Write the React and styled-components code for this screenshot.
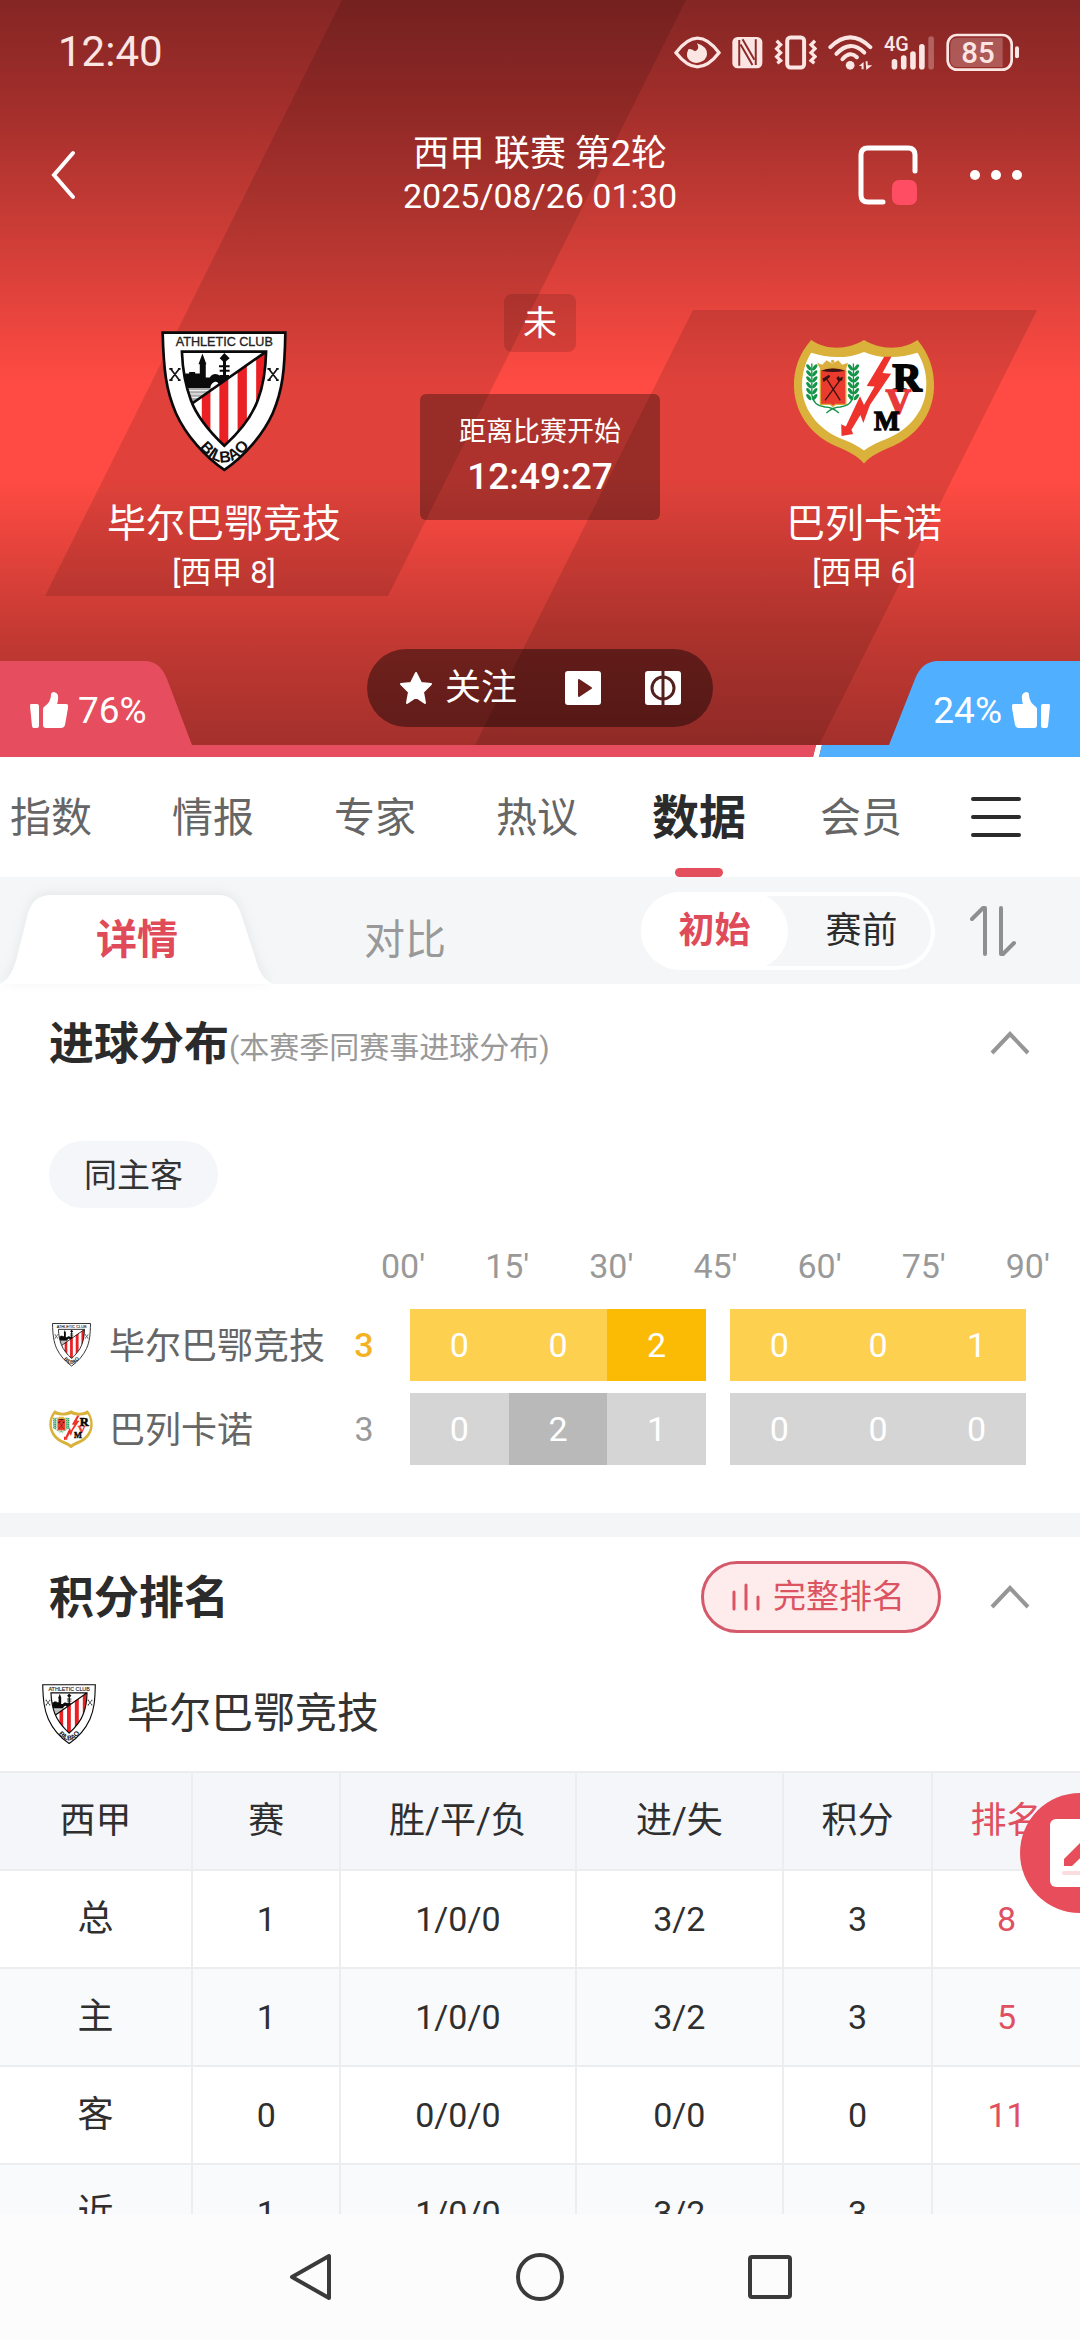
import React, { useId, useState } from "react";
import styled, { createGlobalStyle } from "styled-components";

const GlobalStyle = createGlobalStyle`
  * {
    box-sizing: border-box;
  }
  body {
    margin: 0;
    background-color: #fff;
    color: #333;
    font-family: Roboto, "Noto Sans CJK SC", sans-serif;
  }
  button {
    border: none;
    padding: 0;
    background: none;
    color: inherit;
    font-family: inherit;
    cursor: pointer;
  }
  svg {
    display: block;
    flex-shrink: 0;
  }
  h1, h2, p {
    margin: 0;
    font-weight: 400;
  }
`;

const Screen = styled.div`
  display: flex;
  flex-direction: column;
  height: 100vh;
  position: relative;
  overflow: hidden;
`;

const Scroll = styled.main`
  flex: 1;
  min-height: 0;
  overflow-x: hidden;
  overflow-y: auto;
  scrollbar-width: none;
`;

/* ---------- hero ---------- */

const Hero = styled.header`
  position: relative;
  color: #fff;
  background: linear-gradient(
    to bottom,
    #842624 0,
    #a22e2b 105px,
    #c63b35 215px,
    #ff4b43 385px,
    #ff4b43 480px,
    #c53a33 630px,
    #a02f2b 757px
  );
`;

const Stripes = styled.svg`
  position: absolute;
  top: 0;
  left: 0;
  width: 100%;
  height: 100%;
`;

const StatusBar = styled.div`
  position: relative;
  display: flex;
  justify-content: space-between;
  align-items: center;
  height: 104px;
  padding: 0 60px 0 58px;
  color: #fbe6e4;
`;

const Clock = styled.span`
  font-size: 42px;
  line-height: 52px;
`;

const StatusIcons = styled.div`
  display: flex;
  align-items: center;
  gap: 11px;
`;

const TitleBar = styled.div`
  position: relative;
  display: grid;
  grid-template-columns: 1fr auto 1fr;
  align-items: center;
  margin-top: 29px;
  padding: 0 58px;
`;

const IconButton = styled.button`
  display: flex;
  align-items: center;
  justify-content: center;
`;

const BackButton = styled(IconButton)`
  margin-left: -10px;
`;

const TitleActions = styled.div`
  display: flex;
  align-items: center;
  justify-content: flex-end;
  gap: 52px;
`;

const MatchTitle = styled.h1`
  text-align: center;
  font-size: 36px;
  line-height: 42px;
`;

const MatchTime = styled.span`
  display: block;
  font-size: 34px;
`;

const Versus = styled.div`
  position: relative;
  display: grid;
  grid-template-columns: 1fr 240px 1fr;
  margin-top: 77px;
`;

const Team = styled.div`
  display: flex;
  flex-direction: column;
  align-items: center;
  padding-top: 37px;
  padding-left: ${(props) => (props.$home ? "28px" : "0")};
  padding-right: ${(props) => (props.$home ? "0" : "12px")};
`;

const CrestBox = styled.div`
  display: flex;
  align-items: center;
  height: 141px;
  margin-bottom: 27px;
`;

const TeamName = styled.h2`
  font-size: 39px;
  line-height: 50px;
`;

const TeamRank = styled.p`
  margin-top: 6px;
  font-size: 31px;
  line-height: 36px;
`;

const Center = styled.div`
  display: flex;
  flex-direction: column;
  align-items: center;
  gap: 42px;
`;

const StateBadge = styled.span`
  width: 72px;
  border-radius: 8px;
  background-color: rgba(0, 0, 0, 0.13);
  text-align: center;
  font-size: 34px;
  line-height: 58px;
`;

const Countdown = styled.div`
  width: 100%;
  height: 126px;
  padding-top: 20px;
  border-radius: 6px;
  background-color: rgba(0, 0, 0, 0.32);
  text-align: center;
  font-size: 27px;
  line-height: 36px;
`;

const CountdownTime = styled.div`
  margin-top: 4px;
  font-size: 37px;
  font-weight: 500;
  line-height: 46px;
`;

const HeroFooter = styled.div`
  position: relative;
  display: grid;
  grid-template-columns: 1fr auto 1fr;
  height: 108px;
  margin-top: 58px;
`;

const SupportShape = styled.svg`
  position: absolute;
  left: 0;
  bottom: 0;
  width: 100%;
  height: 96px;
`;

const Support = styled.button`
  position: relative;
  display: flex;
  align-items: center;
  align-self: end;
  justify-content: ${(props) => (props.$away ? "flex-end" : "flex-start")};
  gap: 10px;
  height: 96px;
  padding: 2px 30px 0;
  font-size: 37px;
`;

const ActionPill = styled.div`
  position: relative;
  display: flex;
  align-items: center;
  align-self: start;
  height: 78px;
  padding: 0 32px;
  border-radius: 39px;
  background-color: rgba(0, 0, 0, 0.42);
`;

const FollowButton = styled.button`
  display: flex;
  align-items: center;
  gap: 12px;
  margin-right: 48px;
  font-size: 36px;
  line-height: 44px;
`;

const PillIcon = styled(IconButton)`
  & + & {
    margin-left: 44px;
  }
`;

/* ---------- navigation ---------- */

const NavBar = styled.nav`
  display: flex;
  align-items: center;
  justify-content: space-between;
  height: 120px;
  padding-right: 59px;
  overflow: hidden;
`;

const NavTabs = styled.div`
  display: grid;
  grid-template-columns: repeat(6, 15vw);
  height: 100%;
  margin-left: -30px;
`;

const NavTab = styled.button`
  position: relative;
  padding-top: 2px;
  color: ${(props) => (props.$active ? "#2b2b2b" : "#666")};
  font-size: ${(props) => (props.$active ? "47px" : "41px")};
  font-weight: ${(props) => (props.$active ? 700 : 400)};
  line-height: 60px;
  &::after {
    content: "";
    display: ${(props) => (props.$active ? "block" : "none")};
    position: absolute;
    bottom: 0;
    left: 50%;
    width: 48px;
    height: 9px;
    margin-left: -24px;
    border-radius: 5px;
    background-color: #e34f5d;
  }
`;

const SubBar = styled.div`
  display: flex;
  align-items: center;
  height: 107px;
  padding-right: 64px;
  background-color: #f4f6f7;
`;

const SubTab = styled.button`
  position: relative;
  align-self: flex-end;
  width: ${(props) => (props.$active ? "274px" : "262px")};
  height: 89px;
  color: ${(props) => (props.$active ? "#e04b5a" : "#999")};
  font-size: 41px;
  font-weight: ${(props) => (props.$active ? 700 : 400)};
  line-height: 48px;
`;

const SubTabShape = styled.svg`
  position: absolute;
  top: 0;
  left: 0;
  width: 100%;
  height: 100%;
  overflow: visible;
  filter: drop-shadow(0 -2px 6px rgba(120, 130, 140, 0.12));
`;

const SubTabText = styled.span`
  position: relative;
`;

const Segments = styled.div`
  display: flex;
  margin-left: auto;
  border-radius: 39px;
  box-shadow: inset 0 0 0 4px #fff;
`;

const Segment = styled.button`
  width: 147px;
  height: 78px;
  border-radius: 39px;
  background-color: ${(props) => (props.$active ? "#fff" : "transparent")};
  color: ${(props) => (props.$active ? "#e04b5a" : "#2b2b2b")};
  font-size: 36px;
  font-weight: ${(props) => (props.$active ? 700 : 400)};
  line-height: 44px;
`;

const SortButton = styled(IconButton)`
  margin-left: 35px;
`;

/* ---------- sections ---------- */

const Section = styled.section`
  border-bottom: ${(props) => (props.$divided ? "24px solid #f4f5f7" : "none")};
`;

const SectionHead = styled.div`
  display: flex;
  align-items: center;
  height: 72px;
  margin-top: ${(props) => props.$top}px;
  padding: 0 50px 0 49px;
`;

const SectionTitle = styled.h2`
  padding-top: 3px;
  color: #2b2b2b;
  font-size: 45px;
  font-weight: 700;
  line-height: 60px;
`;

const SectionNote = styled.span`
  padding-top: 9px;
  color: #999;
  font-size: 30px;
  line-height: 40px;
`;

const Fold = styled(IconButton)`
  margin-left: auto;
`;

const Chip = styled.button`
  height: 67px;
  margin: 62px 0 0 49px;
  padding: 3px 35px 0;
  border-radius: 34px;
  background-color: #f4f6fa;
  color: #333;
  font-size: 33px;
  line-height: 40px;
`;

const Minutes = styled.div`
  display: flex;
  justify-content: space-between;
  margin: 38px 30px 23px 381px;
  color: #999;
  font-size: 34px;
  line-height: 40px;
`;

const GoalRow = styled.div`
  display: grid;
  grid-template-columns: 60px 225px 60px 1fr;
  align-items: center;
  height: 72px;
  margin-bottom: 12px;
  padding: 0 54px 0 49px;
  color: #666;
  font-size: 36px;
`;

const GoalRows = styled.div`
  padding-bottom: 36px;
`;

const MiniCrest = styled.div`
  display: flex;
  justify-content: center;
  width: 44px;
`;

const GoalTeam = styled.span`
  padding-top: 3px;
  line-height: 44px;
`;

const GoalTotal = styled.span`
  color: ${(props) => (props.$home ? "#f4b223" : "#999")};
  font-size: 34px;
  font-weight: ${(props) => (props.$home ? 500 : 400)};
  line-height: 72px;
  text-align: center;
`;

const Halves = styled.div`
  display: grid;
  grid-template-columns: 1fr 1fr;
  gap: 24px;
  margin-left: 16px;
`;

const Half = styled.div`
  display: grid;
  grid-template-columns: repeat(3, 1fr);
`;

const GoalCell = styled.span`
  background-color: ${(props) =>
    props.$home
      ? props.$peak
        ? "#fbbb05"
        : "#fed050"
      : props.$peak
      ? "#b9b9b9"
      : "#d5d5d5"};
  color: #fff;
  font-size: 34px;
  line-height: 72px;
  text-align: center;
`;

const FullTable = styled.button`
  display: flex;
  align-items: center;
  gap: 13px;
  height: 72px;
  margin-left: auto;
  padding: 0 33px 0 28px;
  border: 3px solid #d4596a;
  border-radius: 36px;
  background-color: #feecec;
  color: #dc5362;
  font-size: 33px;
  line-height: 40px;
  & + ${Fold} {
    margin-left: 49px;
  }
`;

const StandingTeam = styled.div`
  display: flex;
  align-items: center;
  gap: 31px;
  height: 60px;
  margin: 51px 0 27px 42px;
  font-size: 42px;
  line-height: 60px;
`;

const Standings = styled.table`
  width: 100%;
  border-collapse: collapse;
  table-layout: fixed;
  text-align: center;
  color: #2f2f2f;
  line-height: 44px;
`;

const Row = styled.tr`
  height: 98px;
  background-color: ${(props) => (props.$alt ? "#f9fafc" : "#fff")};
`;

const HeadCell = styled.th`
  width: ${(props) => props.$width};
  padding: 0;
  border: 2px solid #ebedef;
  border-left-width: 0;
  background-color: #f4f6fa;
  font-size: 36px;
  font-weight: 400;
  &:last-child {
    border-right: none;
    color: #e05060;
  }
`;

const Cell = styled.td`
  padding: 0;
  border: 2px solid #ebedef;
  border-left-width: 0;
  font-size: 34px;
  &:first-child {
    font-size: 36px;
  }
  &:last-child {
    border-right: none;
    color: #e05060;
  }
`;

const Compose = styled.button`
  position: absolute;
  top: 1793px;
  right: -60px;
  width: 120px;
  height: 120px;
  border-radius: 50%;
  background-color: #e84d5b;
  display: flex;
  align-items: center;
  justify-content: center;
`;

const SystemBar = styled.footer`
  display: flex;
  align-items: center;
  justify-content: center;
  gap: 181px;
  height: 126px;
  background-color: #fcfcfc;
`;

/* ---------- drawings ---------- */

const AthleticCrest = ({ width }) => {
  const id = useId();
  return (
    <svg width={width} viewBox="31 32 380 426" aria-hidden="true">
      <path
        d="M36 37H406C404 150 398 210 368 280C338 346 280 412 222 451C164 412 106 346 76 280C46 210 39 150 36 37Z"
        fill="#fff"
        stroke="#0a0a0a"
        strokeWidth="8"
      />
      <clipPath id={id + "in"}>
        <path d="M94 94H348C347 140 340 196 323 240C303 296 262 342 222 378C184 342 141 296 121 240C102 190 96 146 94 94Z" />
      </clipPath>
      <g clipPath={`url(#${id}in)`}>
        <path d="M90 90H350L125 250Z" fill="#fff" />
        <path d="M104 160H116V156H134V160H148V132H144L156 100L168 132H166V172H178C188 158 200 160 210 168H232V186L212 200H208C206 188 198 182 192 186C184 190 180 196 180 204H100Z" fill="#0a0a0a" />
        <path d="M104 204H190L128 250Z" fill="#aaa" />
        <path d="M110 212H180M114 222H166M118 232H150" stroke="#fff" strokeWidth="3" />
        <path d="M222 98L238 114L222 128L208 114Z M218 120H227V184H218Z" fill="#0a0a0a" />
        <path d="M206 138H238M208 152H238M208 168H236" stroke="#0a0a0a" strokeWidth="6" />
        <path d="M350 92V400H110L126 250Z" fill="#fff" />
        <path
          d="M154 228L180 210V400H154Z M207 190L234 172V400H207Z M262 152L290 133V400H262Z M318 114L346 94V400H318Z"
          fill="#ea2024"
        />
      </g>
      <path
        d="M94 94H348C347 140 340 196 323 240C303 296 262 342 222 378C184 342 141 296 121 240C102 190 96 146 94 94Z M348 94L126 250"
        fill="none"
        stroke="#0a0a0a"
        strokeWidth="8"
      />
      <path
        d="M60 146L86 180M86 146L60 180 M356 146L382 180M382 146L356 180 M56 146H66 M82 146H90 M56 180H66 M82 180H90 M352 146H362 M378 146H386 M352 180H362 M378 180H386"
        stroke="#111"
        strokeWidth="5"
      />
      <text x="222" y="78" textAnchor="middle" fontFamily="Liberation Sans" fontSize="38" fill="#222" stroke="#222">
        ATHLETIC CLUB
      </text>
      <path id={id + "arc"} d="M112 330Q222 528 332 326" fill="none" />
      <text fontFamily="Liberation Sans" fontWeight="700" fontSize="48" fill="#111" textAnchor="middle">
        <textPath href={`#${id}arc`} startOffset="50%">
          BILBAO
        </textPath>
      </text>
    </svg>
  );
};

const laurel = [0, 1, 2, 3, 4, 5];

const RayoCrest = ({ width }) => (
  <svg width={width} viewBox="37 38 430 379" aria-hidden="true">
    <path
      d="M92 41C140 74 205 70 252 41C299 70 366 74 414 41C448 82 466 130 464 186C461 272 405 334 340 362C300 379 272 392 252 415C232 392 206 379 166 362C100 334 44 272 40 186C38 130 56 82 92 41Z"
      fill="#d9b13b"
    />
    <path
      d="M92 80C148 98 206 97 252 77C298 97 358 98 414 80C434 112 444 150 440 192C434 260 386 312 330 336C296 350 272 360 252 376C232 360 210 350 174 336C120 312 70 260 65 192C62 150 72 112 92 80Z"
      fill="#fff"
    />
    <path d="M122 134L110 110L126 116L138 102L156 112L174 102L186 116L204 110L196 134Z" fill="#dcae3c" />
    <circle cx="157" cy="106" r="5" fill="#dcae3c" />
    <path d="M120 132Q158 118 197 132V236H166L158 242L150 236H120Z" fill="#ea3b2e" stroke="#d9a93a" strokeWidth="4" />
    <path d="M122 134Q158 120 195 134Q158 142 122 134Z" fill="#3a1414" />
    <path d="M136 154L180 224M180 162L134 224" stroke="#3a1010" strokeWidth="4" />
    <path d="M126 158L146 146L150 152L130 168Z M168 156L176 150L178 156L188 152L186 164L174 166Z" fill="#3a1010" />
    {laurel.map((i) => {
      const y = 124 + i * 18;
      return (
        <g key={i} fill="#149447">
          <ellipse cx="85" cy={y} rx="5" ry="11" transform={`rotate(-38 85 ${y})`} />
          <ellipse cx="103" cy={y} rx="5" ry="11" transform={`rotate(38 103 ${y})`} />
          <ellipse cx="211" cy={y} rx="5" ry="11" transform={`rotate(-38 211 ${y})`} />
          <ellipse cx="229" cy={y} rx="5" ry="11" transform={`rotate(38 229 ${y})`} />
        </g>
      );
    })}
    <path
      d="M94 112V206Q98 240 134 244Q156 244 176 262M220 112V206Q216 240 180 244Q158 244 138 262"
      fill="none"
      stroke="#149447"
      strokeWidth="4"
    />
    <path
      d="M313 92H335L308 141L334 143L270 238L250 292L241 268L214 313L219 326L184 332L183 296L197 303L240 211L252 238L284 182L260 180Z"
      fill="#ee332c"
    />
    <g fontFamily="Liberation Serif" fontWeight="700">
      <text x="338" y="196" fontSize="122" fill="#050505" stroke="#050505" strokeWidth="6">R</text>
      <text x="318" y="264" fontSize="106" fill="#e83a3a" stroke="#e83a3a" strokeWidth="5">V</text>
      <text x="282" y="314" fontSize="82" fill="#050505" stroke="#050505" strokeWidth="4">M</text>
    </g>
  </svg>
);

const EyeIcon = () => (
  <svg width="47" height="33" viewBox="65 45 141 98">
    <path d="M71 95Q104 51 135 51Q168 51 200 95Q168 137 135 137Q104 137 71 95Z" fill="none" stroke="currentColor" strokeWidth="10" />
    <path d="M134 66Q144 84 128 90Q116 82 108 84Q98 106 112 118Q124 128 140 124Q162 118 164 100Q166 76 134 66Z" fill="currentColor" />
  </svg>
);

const NfcIcon = () => (
  <svg width="31" height="33" viewBox="240 45 94 98">
    <rect x="241" y="47" width="91" height="95" rx="16" fill="currentColor" />
    <path d="M262 56V134M312 54V132" stroke="#8e2926" strokeWidth="6" />
    <path d="M266 70L302 132M272 54L308 116" stroke="#8e2926" strokeWidth="6" />
  </svg>
);

const VibrateIcon = () => (
  <svg width="43" height="36" viewBox="366 40 130 108" fill="none" stroke="currentColor">
    <rect x="406" y="50" width="51" height="91" rx="10" strokeWidth="12" />
    <path d="M374 60L386 72L374 84L386 96L374 108L386 120L376 128M490 60L478 72L490 84L478 96L490 108L478 120L488 128" strokeWidth="10" />
  </svg>
);

const WifiIcon = () => (
  <svg width="45" height="35" viewBox="530 38 134 104">
    <g fill="none" stroke="currentColor" strokeWidth="12" strokeLinecap="round">
      <path d="M537 74Q596 16 656 74" />
      <path d="M555 94Q596 50 638 90" />
      <path d="M573 110Q596 84 616 104" />
    </g>
    <circle cx="596" cy="128" r="13" fill="currentColor" />
    <path d="M622 130L636 118V140H630V130Z M642 116H648V128H662L644 142Z" fill="currentColor" />
  </svg>
);

const SignalIcon = () => (
  <svg width="51" height="35" viewBox="698 38 153 106">
    <text x="697" y="86" fontFamily="Roboto" fontWeight="500" fontSize="60" fill="currentColor">4G</text>
    <g stroke="currentColor" strokeWidth="17" strokeLinecap="round">
      <path d="M729 119V134M757 108V134M785 96V134M812 74V134" />
      <path d="M840 50V134" opacity=".3" />
    </g>
  </svg>
);

const BatteryIcon = () => (
  <svg width="74" height="38" viewBox="884 34 222 114">
    <rect x="889" y="40" width="192" height="104" rx="28" fill="none" stroke="currentColor" strokeWidth="8" />
    <path d="M918 48H1054V136H918Q897 136 897 114V70Q897 48 918 48Z" fill="currentColor" opacity=".25" />
    <path d="M1097 80V104" stroke="currentColor" strokeWidth="12" strokeLinecap="round" />
    <text x="980" y="124" textAnchor="middle" fontFamily="Roboto" fontWeight="500" fontSize="88" fill="currentColor">85</text>
  </svg>
);

const ThumbIcon = ({ flip }) => (
  <svg width="38" height="36" viewBox="0 0 38 36" fill="currentColor">
    <g transform={flip ? "translate(38 0) scale(-1 1)" : undefined}>
      <path d="M1 12H7Q9 12 9 14V34Q9 36 7 36H4Q2 36 2 34L0 14Q0 12 1 12Z" />
      <path d="M14 15Q21 10 21 3Q21 0 24 0Q29 1 28 7Q28 10 27 12H36Q39 12 38 16L35 33Q34 36 31 36H16Q13 36 13 33V17Q13 16 14 15Z" />
    </g>
  </svg>
);

const CaretIcon = () => (
  <svg width="40" height="24" viewBox="0 0 40 24" fill="none" stroke="#969696" strokeWidth="4">
    <path d="M2 22L20 3L38 22" />
  </svg>
);

/* ---------- data ---------- */

const navItems = ["指数", "情报", "专家", "热议", "数据", "会员"];
const minutes = ["00'", "15'", "30'", "45'", "60'", "75'", "90'"];
const goals = [
  { name: "毕尔巴鄂竞技", home: true, total: 3, halves: [[0, 0, 2], [0, 0, 1]] },
  { name: "巴列卡诺", home: false, total: 3, halves: [[0, 2, 1], [0, 0, 0]] },
];
const columns = [
  { label: "西甲", width: "17.8%" },
  { label: "赛", width: "13.7%" },
  { label: "胜/平/负", width: "21.8%" },
  { label: "进/失", width: "19.2%" },
  { label: "积分", width: "13.8%" },
  { label: "排名", width: "13.7%" },
];
const standings = [
  ["总", "1", "1/0/0", "3/2", "3", "8"],
  ["主", "1", "1/0/0", "3/2", "3", "5"],
  ["客", "0", "0/0/0", "0/0", "0", "11"],
  ["近", "1", "1/0/0", "3/2", "3", ""],
];

const App = () => {
  const [nav, setNav] = useState("数据");
  const [sub, setSub] = useState("详情");
  const [segment, setSegment] = useState("初始");

  return (
    <Screen>
      <GlobalStyle />
      <Scroll>
        <Hero>
          <Stripes viewBox="0 0 1080 757" preserveAspectRatio="none" aria-hidden="true">
            <path d="M342 0H686L388 596H45Z M693 310H1037L819 745H475Z" fill="#000" opacity=".12" />
          </Stripes>
          <StatusBar>
            <Clock>12:40</Clock>
            <StatusIcons>
              <EyeIcon />
              <NfcIcon />
              <VibrateIcon />
              <WifiIcon />
              <SignalIcon />
              <BatteryIcon />
            </StatusIcons>
          </StatusBar>
          <TitleBar>
            <div>
              <BackButton aria-label="返回">
                <svg width="30" height="50" viewBox="0 0 30 50" fill="none" stroke="#fff" strokeWidth="4" strokeLinecap="round">
                  <path d="M25 3L6 25L25 47" />
                </svg>
              </BackButton>
            </div>
            <MatchTitle>
              西甲 联赛 第2轮
              <MatchTime>2025/08/26 01:30</MatchTime>
            </MatchTitle>
            <TitleActions>
              <IconButton aria-label="小窗">
                <svg width="60" height="60" viewBox="0 0 60 60">
                  <path d="M25 57H10Q3 57 3 50V10Q3 3 10 3H50Q57 3 57 10V26" fill="none" stroke="#fff" strokeWidth="5" strokeLinecap="round" />
                  <rect x="34" y="35" width="25" height="25" rx="7" fill="#ff4d63" />
                </svg>
              </IconButton>
              <IconButton aria-label="更多">
                <svg width="52" height="12" viewBox="0 0 52 12" fill="#fff">
                  <circle cx="5" cy="6" r="5" />
                  <circle cx="26" cy="6" r="5" />
                  <circle cx="47" cy="6" r="5" />
                </svg>
              </IconButton>
            </TitleActions>
          </TitleBar>
          <Versus>
            <Team $home>
              <CrestBox>
                <AthleticCrest width="126" />
              </CrestBox>
              <TeamName>毕尔巴鄂竞技</TeamName>
              <TeamRank>[西甲 8]</TeamRank>
            </Team>
            <Center>
              <StateBadge>未</StateBadge>
              <Countdown>
                距离比赛开始
                <CountdownTime>12:49:27</CountdownTime>
              </Countdown>
            </Center>
            <Team>
              <CrestBox>
                <RayoCrest width="142" />
              </CrestBox>
              <TeamName>巴列卡诺</TeamName>
              <TeamRank>[西甲 6]</TeamRank>
            </Team>
          </Versus>
          <HeroFooter>
            <SupportShape viewBox="0 0 1080 96" preserveAspectRatio="none" aria-hidden="true">
              <path d="M816 84H822L819 96H813Z" fill="#fff" />
              <path d="M0 0H145Q160 0 167 18L192 84H816L813 96H0Z" fill="#e64d5e" />
              <path d="M1080 0H938Q922 0 915 18L889 84H822L819 96H1080Z" fill="#50afff" />
            </SupportShape>
            <Support>
              <ThumbIcon />
              76%
            </Support>
            <ActionPill>
              <FollowButton>
                <svg width="34" height="34" viewBox="0 0 34 34" fill="#fff" stroke="#fff" strokeWidth="2" strokeLinejoin="round">
                  <path d="M17 2L22 12L32 13L24 21L26 32L17 26L8 32L10 21L2 13L12 12Z" />
                </svg>
                关注
              </FollowButton>
              <PillIcon aria-label="视频">
                <svg width="36" height="34" viewBox="0 0 36 34">
                  <rect width="36" height="34" rx="3" fill="#fff" />
                  <path d="M14 9L26 17L14 25Z" fill="#6a1f1c" stroke="#6a1f1c" strokeWidth="2" strokeLinejoin="round" />
                </svg>
              </PillIcon>
              <PillIcon aria-label="球场">
                <svg width="36" height="34" viewBox="0 0 36 34">
                  <rect width="36" height="34" rx="3" fill="#fff" />
                  <g fill="none" stroke="#54201e" strokeWidth="3">
                    <circle cx="18" cy="17" r="11" />
                    <path d="M18 0V34" />
                  </g>
                </svg>
              </PillIcon>
            </ActionPill>
            <Support $away>
              24%
              <ThumbIcon flip />
            </Support>
          </HeroFooter>
        </Hero>

        <NavBar>
          <NavTabs>
            {navItems.map((item) => (
              <NavTab key={item} $active={item === nav} onClick={() => setNav(item)}>
                {item}
              </NavTab>
            ))}
          </NavTabs>
          <IconButton aria-label="菜单">
            <svg width="50" height="42" viewBox="0 0 50 42" stroke="#2b2b2b" strokeWidth="4" strokeLinecap="round">
              <path d="M2 3H48M2 21H48M2 39H48" />
            </svg>
          </IconButton>
        </NavBar>

        <SubBar>
          {["详情", "对比"].map((item) => (
            <SubTab key={item} $active={item === sub} onClick={() => setSub(item)}>
              {item === sub && (
                <SubTabShape viewBox="0 0 274 89" preserveAspectRatio="none" aria-hidden="true">
                  <path d="M0 89C10 84 14 74 18 58L27 22C31 6 38 0 52 0H218C232 0 238 8 242 22L255 62C260 80 265 86 274 89Z" fill="#fff" />
                </SubTabShape>
              )}
              <SubTabText>{item}</SubTabText>
            </SubTab>
          ))}
          <Segments>
            {["初始", "赛前"].map((item) => (
              <Segment key={item} $active={item === segment} onClick={() => setSegment(item)}>
                {item}
              </Segment>
            ))}
          </Segments>
          <SortButton aria-label="排序">
            <svg width="46" height="50" viewBox="0 0 46 50" fill="none" stroke="#8f8f8f" strokeWidth="4" strokeLinecap="round" strokeLinejoin="round">
              <path d="M2 13L13 2H15V48M31 2V48H33L44 37" />
            </svg>
          </SortButton>
        </SubBar>

        <Section $divided>
          <SectionHead $top={23}>
            <SectionTitle>进球分布</SectionTitle>
            <SectionNote>(本赛季同赛事进球分布)</SectionNote>
            <Fold aria-label="收起">
              <CaretIcon />
            </Fold>
          </SectionHead>
          <Chip>同主客</Chip>
          <Minutes>
            {minutes.map((m) => (
              <span key={m}>{m}</span>
            ))}
          </Minutes>
          <GoalRows>
            {goals.map((team) => (
              <GoalRow key={team.name}>
                <MiniCrest>
                  {team.home ? <AthleticCrest width="39" /> : <RayoCrest width="44" />}
                </MiniCrest>
                <GoalTeam>{team.name}</GoalTeam>
                <GoalTotal $home={team.home}>{team.total}</GoalTotal>
                <Halves>
                  {team.halves.map((half, i) => (
                    <Half key={i}>
                      {half.map((n, j) => (
                        <GoalCell key={j} $home={team.home} $peak={n === 2}>
                          {n}
                        </GoalCell>
                      ))}
                    </Half>
                  ))}
                </Halves>
              </GoalRow>
            ))}
          </GoalRows>
        </Section>

        <Section>
          <SectionHead $top={24}>
            <SectionTitle>积分排名</SectionTitle>
            <FullTable>
              <svg width="28" height="28" viewBox="0 0 28 28" stroke="#dc5362" strokeWidth="3" strokeLinecap="round">
                <path d="M2 9V26M14 2V26M26 14V26" />
              </svg>
              完整排名
            </FullTable>
            <Fold aria-label="收起">
              <CaretIcon />
            </Fold>
          </SectionHead>
          <StandingTeam>
            <AthleticCrest width="54" />
            毕尔巴鄂竞技
          </StandingTeam>
          <Standings>
            <thead>
              <Row>
                {columns.map((c) => (
                  <HeadCell key={c.label} $width={c.width}>
                    {c.label}
                  </HeadCell>
                ))}
              </Row>
            </thead>
            <tbody>
              {standings.map((row, i) => (
                <Row key={row[0]} $alt={i % 2 === 1}>
                  {row.map((value, j) => (
                    <Cell key={j}>{value}</Cell>
                  ))}
                </Row>
              ))}
            </tbody>
          </Standings>
        </Section>
      </Scroll>

      <Compose aria-label="发表">
        <svg width="60" height="68" viewBox="0 0 60 68">
          <rect width="60" height="68" rx="6" fill="#fff" />
          <path d="M14 47V40L38 16L46 24L22 47Z" fill="#e84d5b" />
          <path d="M14 54H48" stroke="#fbdde0" strokeWidth="4" strokeLinecap="round" />
        </svg>
      </Compose>

      <SystemBar>
        <IconButton aria-label="后退">
          <svg width="48" height="50" viewBox="0 0 48 50" fill="none" stroke="#3a3a3a" strokeWidth="4" strokeLinejoin="round">
            <path d="M43 4V46L6 25Z" />
          </svg>
        </IconButton>
        <IconButton aria-label="主页">
          <svg width="50" height="50" viewBox="0 0 50 50" fill="none" stroke="#3a3a3a" strokeWidth="4">
            <circle cx="25" cy="25" r="22" />
          </svg>
        </IconButton>
        <IconButton aria-label="最近任务">
          <svg width="48" height="50" viewBox="0 0 48 50" fill="none" stroke="#3a3a3a" strokeWidth="4" strokeLinejoin="round">
            <rect x="4" y="5" width="40" height="40" rx="2" />
          </svg>
        </IconButton>
      </SystemBar>
    </Screen>
  );
};

export default App;
